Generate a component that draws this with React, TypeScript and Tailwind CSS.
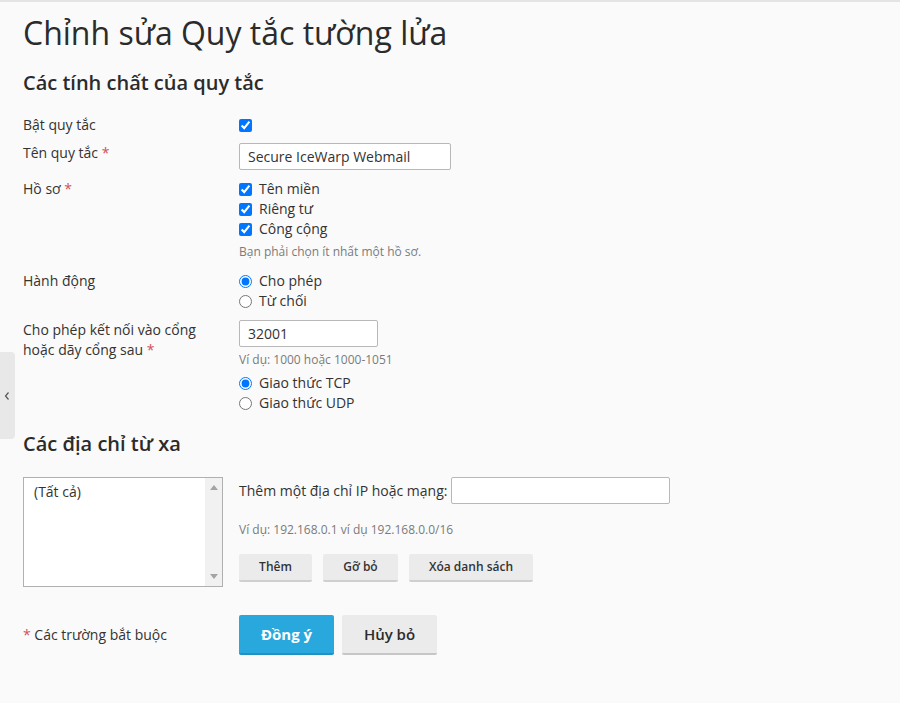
import React from "react";

const Req = () => <span className="text-[#d0505c]">&nbsp;*</span>;

function Check({ label }: { label?: string }) {
  return (
    <label className="flex items-center h-5">
      <input type="checkbox" defaultChecked className="m-0 w-[13px] h-[13px] accent-[#0075ff]" />
      {label && <span className="ml-[7px]">{label}</span>}
    </label>
  );
}

function Radio({ label, name, checked }: { label: string; name: string; checked?: boolean }) {
  return (
    <label className="flex items-center h-5">
      <input type="radio" name={name} defaultChecked={checked} className="m-0 w-[13px] h-[13px] accent-[#0075ff]" />
      <span className="ml-[7px]">{label}</span>
    </label>
  );
}

function SmallBtn({ children, w }: { children: React.ReactNode; w: string }) {
  return (
    <button className={`h-[28px] ${w} bg-[#ebebeb] border-b-2 border-[#cfcfcf] rounded-[2px] text-[12px] font-semibold text-[#333]`}>
      {children}
    </button>
  );
}

export default function App() {
  return (
    <div
      className="relative min-h-screen bg-[#fafafa] border-t-2 border-[#e4e4e4] text-[#333] text-[14px] leading-5"
      style={{ fontFamily: "'Open Sans', 'Liberation Sans', sans-serif" }}
    >
      {/* side handle */}
      <div className="absolute left-0 top-[350px] w-[15px] h-[87px] bg-[#e8e8e8] rounded-r-[4px] flex items-center justify-center">
        <svg width="6" height="10" viewBox="0 0 6 10" className="ml-[-2px]">
          <polyline points="4.5,1.5 1.5,5 4.5,8.5" fill="none" stroke="#555" strokeWidth="1.2" />
        </svg>
      </div>

      <div className="pl-[23px]">
        <h1 className="mt-[9px] text-[32px] leading-[44px] font-normal text-[#2b2b2b]">Chỉnh sửa Quy tắc tường lửa</h1>
        <h2 className="mt-[14px] text-[20px] leading-[28px] font-semibold text-[#2b2b2b]">Các tính chất của quy tắc</h2>

        <div className="mt-[18px] flex">
          <div className="w-[216px]">Bật quy tắc</div>
          <Check />
        </div>

        <div className="mt-[8px] flex">
          <div className="w-[216px]">
            Tên quy tắc<Req />
          </div>
          <input
            defaultValue="Secure IceWarp Webmail"
            className="w-[212px] h-[27px] bg-white border border-[#b8b8b8] rounded-[2px] px-2 text-[14px] text-[#333] outline-none"
          />
        </div>

        <div className="mt-[9px] flex">
          <div className="w-[216px]">
            Hồ sơ<Req />
          </div>
          <div>
            <Check label="Tên miền" />
            <Check label="Riêng tư" />
            <Check label="Công cộng" />
            <div className="mt-[5px] text-[12px] leading-4 text-[#7a7a7a]">Bạn phải chọn ít nhất một hồ sơ.</div>
          </div>
        </div>

        <div className="mt-[11px] flex">
          <div className="w-[216px]">Hành động</div>
          <div>
            <Radio name="act" label="Cho phép" checked />
            <Radio name="act" label="Từ chối" />
          </div>
        </div>

        <div className="mt-[9px] flex">
          <div className="w-[216px] pr-4">
            <div>Cho phép kết nối vào cổng</div>
            <div>
              hoặc dãy cổng sau<Req />
            </div>
          </div>
          <div>
            <input
              defaultValue="32001"
              className="w-[139px] h-[27px] bg-white border border-[#b8b8b8] rounded-[2px] px-2 text-[14px] text-[#333] outline-none"
            />
            <div className="mt-[5px] text-[12px] leading-4 text-[#7a7a7a]">Ví dụ: 1000 hoặc 1000-1051</div>
            <div className="mt-[5px]">
              <Radio name="proto" label="Giao thức TCP" checked />
              <Radio name="proto" label="Giao thức UDP" />
            </div>
          </div>
        </div>

        <h2 className="mt-[17px] text-[20px] leading-[28px] font-semibold text-[#2b2b2b]">Các địa chỉ từ xa</h2>

        <div className="mt-[19px] flex">
          <div className="w-[216px]">
            <div className="w-[200px] h-[110px] bg-white border border-[#b0b0b0] flex">
              <div className="flex-1 pl-[10px] pt-[4px]">(Tất cả)</div>
              <div className="w-[17px] bg-[#f1f1f1] flex flex-col items-center justify-between py-[7px]">
                <svg width="8" height="5" viewBox="0 0 8 5">
                  <polygon points="0,5 8,5 4,0" fill="#a3a3a3" />
                </svg>
                <svg width="8" height="5" viewBox="0 0 8 5">
                  <polygon points="0,0 8,0 4,5" fill="#a3a3a3" />
                </svg>
              </div>
            </div>
          </div>
          <div>
            <div className="flex items-center">
              <span>Thêm một địa chỉ IP hoặc mạng:</span>
              <input className="ml-[4px] w-[219px] h-[27px] bg-white border border-[#b8b8b8] rounded-[2px] px-2 text-[14px] outline-none" />
            </div>
            <div className="mt-[18px] text-[12px] leading-4 text-[#7a7a7a]">Ví dụ: 192.168.0.1 ví dụ 192.168.0.0/16</div>
            <div className="mt-[16px] flex gap-[11px]">
              <SmallBtn w="w-[73px]">Thêm</SmallBtn>
              <SmallBtn w="w-[75px]">Gỡ bỏ</SmallBtn>
              <SmallBtn w="w-[124px]">Xóa danh sách</SmallBtn>
            </div>
          </div>
        </div>

        <div className="mt-[28px] flex items-center">
          <div className="w-[216px]">
            <span className="text-[#d0505c]">*</span> Các trường bắt buộc
          </div>
          <div className="flex gap-[8px]">
            <button className="w-[95px] h-[40px] bg-[#29a8dd] border-b-2 border-[#2190c2] rounded-[2px] text-white text-[15px] font-bold">
              Đồng ý
            </button>
            <button className="w-[95px] h-[40px] bg-[#ebebeb] border-b-2 border-[#c6c6c6] rounded-[2px] text-[#2b2b2b] text-[15px] font-semibold">
              Hủy bỏ
            </button>
          </div>
        </div>
      </div>
    </div>
  );
}
